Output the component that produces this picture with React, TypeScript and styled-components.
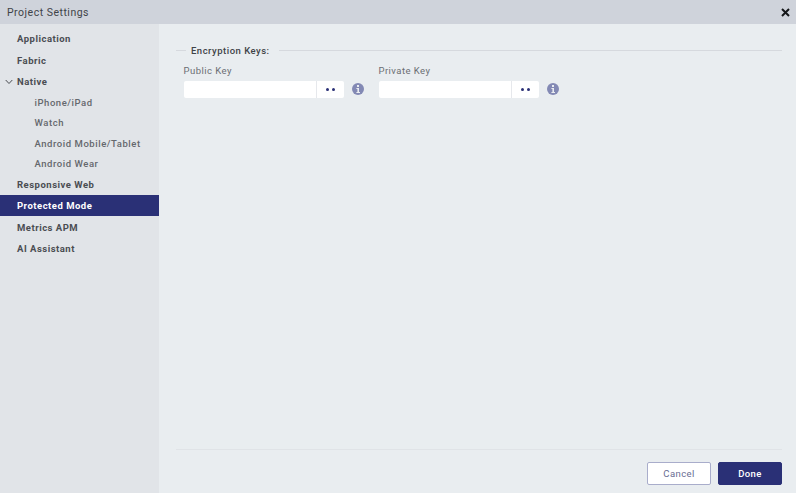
import styled, { createGlobalStyle } from "styled-components";

const Global = createGlobalStyle`
  html, body {
    margin: 0;
    height: 100%;
    overflow: hidden;
    background: #e9edf0;
    font-family: Roboto, "Liberation Sans", sans-serif;
  }
  #root { height: 100%; }
`;

const Dialog = styled.div`
  width: 796px;
  height: 493px;
  display: flex;
  flex-direction: column;
`;

const TitleBar = styled.header`
  height: 24px;
  flex: none;
  display: flex;
  align-items: center;
  justify-content: space-between;
  padding: 0 4px 0 7px;
  background: #cfd3db;
  color: #3f4348;
  font-size: 10.5px;
  letter-spacing: 0.5px;
`;

const CloseButton = styled.button`
  width: 14px;
  height: 14px;
  padding: 0;
  border: 0;
  background: none;
  display: flex;
  align-items: center;
  justify-content: center;
`;

const Body = styled.div`
  flex: 1;
  display: flex;
  min-height: 0;
`;

const Sidebar = styled.nav`
  width: 159px;
  flex: none;
  padding-top: 4px;
  background: #e1e4e8;
  box-sizing: border-box;
`;

const NavItem = styled.div<{ $active?: boolean }>`
  height: 21px;
  margin-bottom: 0.5px;
  display: flex;
  align-items: center;
  padding-left: 17px;
  position: relative;
  font-size: 9.5px;
  font-weight: 700;
  letter-spacing: 0.5px;
  color: ${({ $active }) => ($active ? "#ffffff" : "#4a4d52")};
  background: ${({ $active }) => ($active ? "#2a3076" : "transparent")};
`;

const SubItem = styled.div`
  height: 20.25px;
  display: flex;
  align-items: center;
  padding-left: 34.5px;
  font-size: 9.5px;
  font-weight: 500;
  letter-spacing: 0.55px;
  color: #65686d;
`;

const Chevron = styled.svg`
  position: absolute;
  left: 5px;
  top: 8px;
`;

const Main = styled.main`
  flex: 1;
  display: flex;
  flex-direction: column;
  padding: 0 14px 8px 17px;
  min-width: 0;
`;

const Content = styled.div`
  flex: 1;
  padding-top: 20px;
`;

const Legend = styled.div`
  display: flex;
  align-items: center;
  height: 13px;
  font-size: 9.5px;
  font-weight: 500;
  letter-spacing: 0.5px;
  color: #3f4348;

  &::before {
    content: "";
    width: 10px;
    height: 1px;
    margin-right: 5px;
    background: #d6d9de;
  }

  &::after {
    content: "";
    flex: 1;
    height: 1px;
    margin-left: 9px;
    background: #d6d9de;
  }
`;

const Fields = styled.div`
  display: flex;
  gap: 15px;
  margin-top: 7px;
  padding-left: 8px;
`;

const Field = styled.div`
  display: flex;
  flex-direction: column;
`;

const Label = styled.label`
  height: 13px;
  margin-left: -0.5px;
  display: flex;
  align-items: center;
  font-size: 9.5px;
  letter-spacing: 0.45px;
  color: #6b6e73;
`;

const FieldRow = styled.div`
  display: flex;
  align-items: center;
  margin-top: 4px;
`;

const InputGroup = styled.div`
  width: 160px;
  height: 17px;
  display: flex;
  background: #ffffff;
  border-radius: 2px;
`;

const Input = styled.input`
  flex: 1;
  min-width: 0;
  padding: 0 4px;
  border: 0;
  outline: 0;
  background: none;
`;

const Reveal = styled.button`
  width: 28px;
  flex: none;
  padding: 0 0 1px;
  border: 0;
  border-left: 1px solid #e6e8ec;
  background: none;
  display: flex;
  align-items: center;
  justify-content: center;
  gap: 3px;

  i {
    width: 3px;
    height: 3px;
    border-radius: 50%;
    background: #2a3076;
  }
`;

const InfoIcon = styled.svg`
  margin: -2px 0 0 8px;
  flex: none;
`;

const Footer = styled.footer`
  flex: none;
  height: 35px;
  display: flex;
  justify-content: flex-end;
  align-items: flex-end;
  gap: 7px;
  border-top: 1px solid #e0e3e7;
`;

const Button = styled.button<{ $primary?: boolean }>`
  width: 64px;
  height: 23px;
  padding: 0;
  border-radius: 2px;
  border: 1px solid ${({ $primary }) => ($primary ? "#2a3076" : "#a9adcb")};
  background: ${({ $primary }) => ($primary ? "#2a3076" : "#ffffff")};
  color: ${({ $primary }) => ($primary ? "#ffffff" : "#686c92")};
  font-family: inherit;
  font-size: 9.5px;
  font-weight: ${({ $primary }) => ($primary ? 500 : 400)};
  letter-spacing: 0.4px;
`;

const keys = ["Public Key", "Private Key"];

export default function App() {
  return (
    <Dialog>
      <Global />
      <TitleBar>
        Project Settings
        <CloseButton aria-label="Close">
          <svg width="9" height="9" viewBox="0 0 9 9">
            <path d="M1 1l7 7M8 1L1 8" stroke="#15171a" strokeWidth="2" />
          </svg>
        </CloseButton>
      </TitleBar>
      <Body>
        <Sidebar>
          <NavItem>Application</NavItem>
          <NavItem>Fabric</NavItem>
          <NavItem>
            <Chevron width="8" height="6" viewBox="0 0 8 6">
              <path d="M.7 1l3.3 3.5L7.3 1" fill="none" stroke="#4a4d52" strokeWidth="1" />
            </Chevron>
            Native
          </NavItem>
          <SubItem>iPhone/iPad</SubItem>
          <SubItem>Watch</SubItem>
          <SubItem>Android Mobile/Tablet</SubItem>
          <SubItem>Android Wear</SubItem>
          <NavItem>Responsive Web</NavItem>
          <NavItem $active>Protected Mode</NavItem>
          <NavItem>Metrics APM</NavItem>
          <NavItem>AI Assistant</NavItem>
        </Sidebar>
        <Main>
          <Content>
            <Legend>Encryption Keys:</Legend>
            <Fields>
              {keys.map((key) => (
                <Field key={key}>
                  <Label>{key}</Label>
                  <FieldRow>
                    <InputGroup>
                      <Input />
                      <Reveal aria-label="Show">
                        <i />
                        <i />
                      </Reveal>
                    </InputGroup>
                    <InfoIcon width="12" height="12" viewBox="0 0 12 12">
                      <circle cx="6" cy="6" r="6" fill="#8389b4" />
                      <rect x="5" y="2" width="2" height="2" fill="#e9ecf0" />
                      <path d="M4.4 5h2.6v4h1v1H4.4V9h1V6h-1z" fill="#e9ecf0" />
                    </InfoIcon>
                  </FieldRow>
                </Field>
              ))}
            </Fields>
          </Content>
          <Footer>
            <Button>Cancel</Button>
            <Button $primary>Done</Button>
          </Footer>
        </Main>
      </Body>
    </Dialog>
  );
}
